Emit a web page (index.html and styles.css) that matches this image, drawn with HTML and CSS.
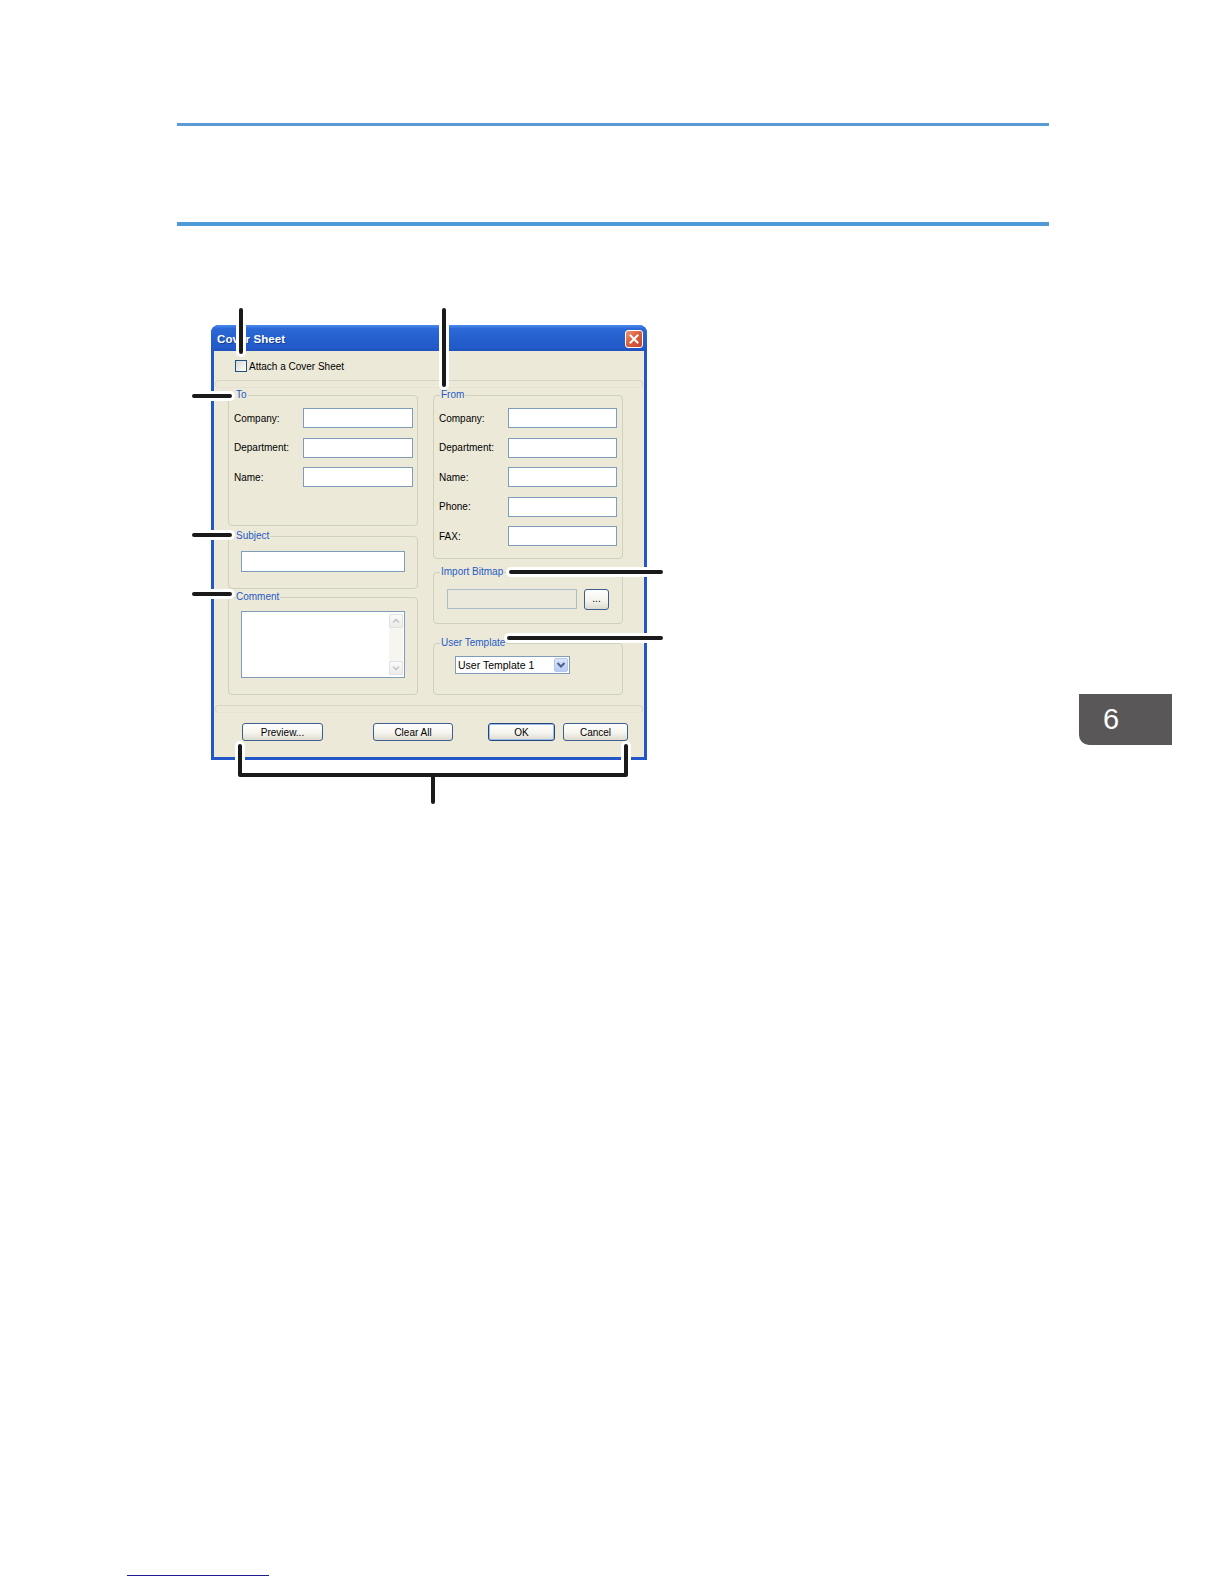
FILE: index.html
```html
<!DOCTYPE html>
<html>
<head>
<meta charset="utf-8">
<title>Cover Sheet</title>
<link rel="stylesheet" href="styles.css">
</head>
<body>
<div class="page">
  <div class="rule rule-thin"></div>
  <div class="rule rule-thick"></div>

  <div class="figure">
    <div class="window">
      <div class="titlebar">
        <span class="title">Cover Sheet</span>
        <span class="close">
          <svg width="16" height="16" viewBox="0 0 16 16"><path d="M4.5 4.5 L11.5 11.5 M11.5 4.5 L4.5 11.5" stroke="#fff" stroke-width="2" stroke-linecap="square"/></svg>
        </span>
      </div>
      <div class="client">
        <div class="attach"><span class="checkbox"></span><span>Attach a Cover Sheet</span></div>
        <div class="band"></div>
        <div class="columns">
          <div class="col">
            <div class="group g-to">
              <span class="legend">To</span>
              <div class="fields">
                <div class="field"><span class="lbl">Company:</span><span class="input"></span></div>
                <div class="field"><span class="lbl">Department:</span><span class="input"></span></div>
                <div class="field"><span class="lbl">Name:</span><span class="input"></span></div>
              </div>
            </div>
            <div class="group g-subject">
              <span class="legend">Subject</span>
              <span class="input wide"></span>
            </div>
            <div class="group g-comment">
              <span class="legend">Comment</span>
              <div class="textarea">
                <div class="scroll">
                  <span class="sbtn"><svg width="12" height="12" viewBox="0 0 12 12"><path d="M3 7.5 L6 4.5 L9 7.5" fill="none" stroke="#c4c6cc" stroke-width="1.6"/></svg></span>
                  <span class="sbtn"><svg width="12" height="12" viewBox="0 0 12 12"><path d="M3 4.5 L6 7.5 L9 4.5" fill="none" stroke="#c4c6cc" stroke-width="1.6"/></svg></span>
                </div>
              </div>
            </div>
          </div>
          <div class="col">
            <div class="group g-from">
              <span class="legend">From</span>
              <div class="fields fields-from">
                <div class="field"><span class="lbl">Company:</span><span class="input"></span></div>
                <div class="field"><span class="lbl">Department:</span><span class="input"></span></div>
                <div class="field"><span class="lbl">Name:</span><span class="input"></span></div>
                <div class="field"><span class="lbl">Phone:</span><span class="input"></span></div>
                <div class="field"><span class="lbl">FAX:</span><span class="input"></span></div>
              </div>
            </div>
            <div class="group g-import">
              <span class="legend">Import Bitmap</span>
              <span class="input disabled"></span>
              <span class="btn dots">...</span>
            </div>
            <div class="group g-user">
              <span class="legend">User Template</span>
              <div class="select">
                <span class="select-text">User Template 1</span>
                <span class="select-arrow"><svg width="12" height="12" viewBox="0 0 12 12"><path d="M2.5 4 L6 7.5 L9.5 4" fill="none" stroke="#4d6185" stroke-width="2"/></svg></span>
              </div>
            </div>
          </div>
        </div>
        <div class="band band-bottom"></div>
        <div class="buttons">
          <span class="btn b-preview">Preview...</span>
          <span class="btn b-clear">Clear All</span>
          <span class="btn b-ok">OK</span>
          <span class="btn b-cancel">Cancel</span>
        </div>
      </div>
    </div>
    <div class="tab">6</div>
  </div>

  <div class="footer-link"></div>

  <svg class="callouts" width="1224" height="1584" viewBox="0 0 1224 1584">
    <g fill="none" stroke-linecap="round" stroke-linejoin="round">
      <g stroke="#ffffff" stroke-width="10">
        <path d="M241 310 V352"/>
        <path d="M444 310 V385"/>
        <path d="M194 396 H230"/>
        <path d="M194 535 H230"/>
        <path d="M194 594 H230"/>
        <path d="M511 572 H661"/>
        <path d="M509 638 H661"/>
        <path d="M240 746 V775 H626 V746"/>
        <path d="M433 775 V802"/>
      </g>
      <g stroke="#1a1a1a" stroke-width="4">
        <path d="M241 310 V352"/>
        <path d="M444 310 V385"/>
        <path d="M194 396 H230"/>
        <path d="M194 535 H230"/>
        <path d="M194 594 H230"/>
        <path d="M511 572 H661"/>
        <path d="M509 638 H661"/>
        <path d="M240 746 V775 H626 V746"/>
        <path d="M433 775 V802"/>
      </g>
    </g>
  </svg>
</div>
</body>
</html>
```

FILE: styles.css
```css
html, body {
  margin: 0;
  padding: 0;
  background: #ffffff;
}

body {
  font-family: "Liberation Sans", Arial, sans-serif;
  font-size: 10px;
  color: #000;
}

.page {
  position: relative;
  width: 1224px;
  height: 1584px;
  overflow: hidden;
}

.rule {
  margin-left: 177px;
  width: 872px;
}

.rule-thin {
  margin-top: 123px;
  height: 3px;
  background: #5b9bd5;
}

.rule-thick {
  margin-top: 96px;
  height: 4px;
  background: #4f9ad8;
}

.figure {
  display: flex;
  align-items: flex-start;
  margin-top: 99px;
}

/* ---------- window ---------- */
.window {
  width: 436px;
  height: 435px;
  margin-left: 211px;
  box-sizing: border-box;
  background: #2157c8;
  border-radius: 8px 8px 0 0;
  padding-bottom: 3px;
  display: flex;
  flex-direction: column;
}

.titlebar {
  height: 26px;
  box-sizing: border-box;
  display: flex;
  align-items: center;
  padding: 1px 4px 0 6px;
  border-radius: 8px 8px 0 0;
  background: linear-gradient(to bottom, #4a8cf0 0%, #2c68d6 14%, #2560cf 50%, #235ac9 85%, #1f52bd 100%);
}

.title {
  flex: 1;
  color: #fff;
  font-weight: bold;
  font-size: 11.5px;
  letter-spacing: 0.1px;
  text-shadow: 1px 1px 0 #143f96;
}

.close {
  width: 18px;
  height: 18px;
  box-sizing: border-box;
  border: 1px solid #ffffff;
  border-radius: 3px;
  background: linear-gradient(135deg, #eb9a7e 0%, #dc6443 40%, #c8432a 100%);
  display: flex;
  align-items: center;
  justify-content: center;
}

.client {
  margin: 0 3px;
  height: 406px;
  box-sizing: border-box;
  padding-top: 9px;
  background: #ece9d8;
}

.attach {
  display: flex;
  align-items: center;
  gap: 2px;
  height: 12px;
  margin-left: 21px;
}

.checkbox {
  width: 12px;
  height: 12px;
  box-sizing: border-box;
  border: 1px solid #1c5180;
  background: linear-gradient(135deg, #d8d8d2 0%, #f4f4f0 70%, #ffffff 100%);
}

.band {
  height: 8px;
  margin: 8px 1px 0;
  box-sizing: border-box;
  border: 1px solid #d9d6c6;
  border-bottom-color: #e6e3d4;
  border-radius: 4px;
}

.band-bottom {
  margin-top: 10px;
}

.columns {
  display: grid;
  grid-template-columns: 190px 190px;
  column-gap: 15px;
  margin: 7px 0 0 14px;
  height: 300px;
}

.col {
  display: flex;
  flex-direction: column;
}

.group {
  position: relative;
  box-sizing: border-box;
  border: 1px solid #d0d0bf;
  border-radius: 4px;
}

.legend {
  position: absolute;
  top: -7px;
  left: 6px;
  padding: 0 1px;
  background: #ece9d8;
  color: #1f5bc6;
  font-size: 10px;
  line-height: 12px;
  white-space: nowrap;
}

.g-to {
  height: 131px;
  padding: 12px 0 0 5px;
}

.g-subject {
  height: 53px;
  margin-top: 10px;
  padding: 14px 0 0 12px;
}

.g-comment {
  height: 98px;
  margin-top: 8px;
  padding: 13px 0 0 12px;
}

.g-from {
  height: 164px;
  padding: 12px 0 0 5px;
}

.g-import {
  height: 52px;
  margin-top: 13px;
  padding: 16px 0 0 13px;
  display: flex;
  align-items: flex-start;
}

.g-user {
  height: 52px;
  margin-top: 19px;
  padding: 12px 0 0 21px;
}

.fields {
  display: flex;
  flex-direction: column;
  gap: 9.7px;
}

.fields-from {
  gap: 9.6px;
}

.field {
  display: flex;
  align-items: center;
  height: 20px;
}

.lbl {
  width: 69px;
  white-space: nowrap;
}

.input {
  display: block;
  width: 110px;
  height: 20px;
  box-sizing: border-box;
  border: 1px solid #7f9db9;
  background: #ffffff;
}

.fields-from .input {
  width: 109px;
}

.input.wide {
  width: 164px;
  height: 21px;
}

.input.disabled {
  width: 130px;
  height: 20px;
  background: #ebe9dc;
  border-color: #aebccc;
}

.textarea {
  width: 164px;
  height: 67px;
  box-sizing: border-box;
  border: 1px solid #7f9db9;
  background: #ffffff;
  padding: 2px 1px;
  display: flex;
  justify-content: flex-end;
}

.scroll {
  width: 14px;
  display: flex;
  flex-direction: column;
  justify-content: space-between;
  background: #f6f5f0;
}

.sbtn {
  height: 14px;
  box-sizing: border-box;
  border: 1px solid #dde1ea;
  border-radius: 2px;
  background: linear-gradient(#fbfbf9, #ecebe6);
  display: flex;
  align-items: center;
  justify-content: center;
}

.select {
  width: 115px;
  height: 18px;
  box-sizing: border-box;
  border: 1px solid #7f9db9;
  background: #ffffff;
  display: flex;
  align-items: center;
  padding: 0 1px 0 2px;
}

.select-text {
  flex: 1;
  font-size: 10.5px;
}

.select-arrow {
  width: 14px;
  height: 14px;
  box-sizing: border-box;
  border: 1px solid #b5c7ee;
  border-radius: 2px;
  background: linear-gradient(#d9e4fd, #b6cbf7);
  display: flex;
  align-items: center;
  justify-content: center;
}

/* ---------- buttons ---------- */
.btn {
  display: flex;
  align-items: center;
  justify-content: center;
  box-sizing: border-box;
  height: 18px;
  border: 1px solid #3d5f8f;
  border-radius: 3px;
  background: linear-gradient(to bottom, #ffffff 0%, #f5f4ee 55%, #dedad0 100%);
  font-size: 10px;
  white-space: nowrap;
}

.dots {
  width: 25px;
  height: 21px;
  margin-left: 7px;
  padding-bottom: 2px;
}

.buttons {
  display: flex;
  margin-top: 10px;
  padding-left: 28px;
}

.b-preview { width: 81px; }
.b-clear { width: 80px; margin-left: 50px; }
.b-ok {
  width: 67px;
  margin-left: 35px;
  border-color: #24457a;
  box-shadow: inset 0 0 0 1px #9ebcea;
}
.b-cancel { width: 65px; margin-left: 8px; }

/* ---------- thumb tab ---------- */
.tab {
  margin-left: 432px;
  margin-top: 369px;
  width: 93px;
  height: 51px;
  box-sizing: border-box;
  padding-left: 24px;
  background: #595757;
  border-bottom-left-radius: 10px;
  color: #ffffff;
  font-size: 29px;
  display: flex;
  align-items: center;
}

.footer-link {
  margin: 815px 0 0 127px;
  width: 142px;
  height: 1px;
  background: #1e1e8f;
}

.callouts {
  position: absolute;
  top: 0;
  left: 0;
  pointer-events: none;
}
```
